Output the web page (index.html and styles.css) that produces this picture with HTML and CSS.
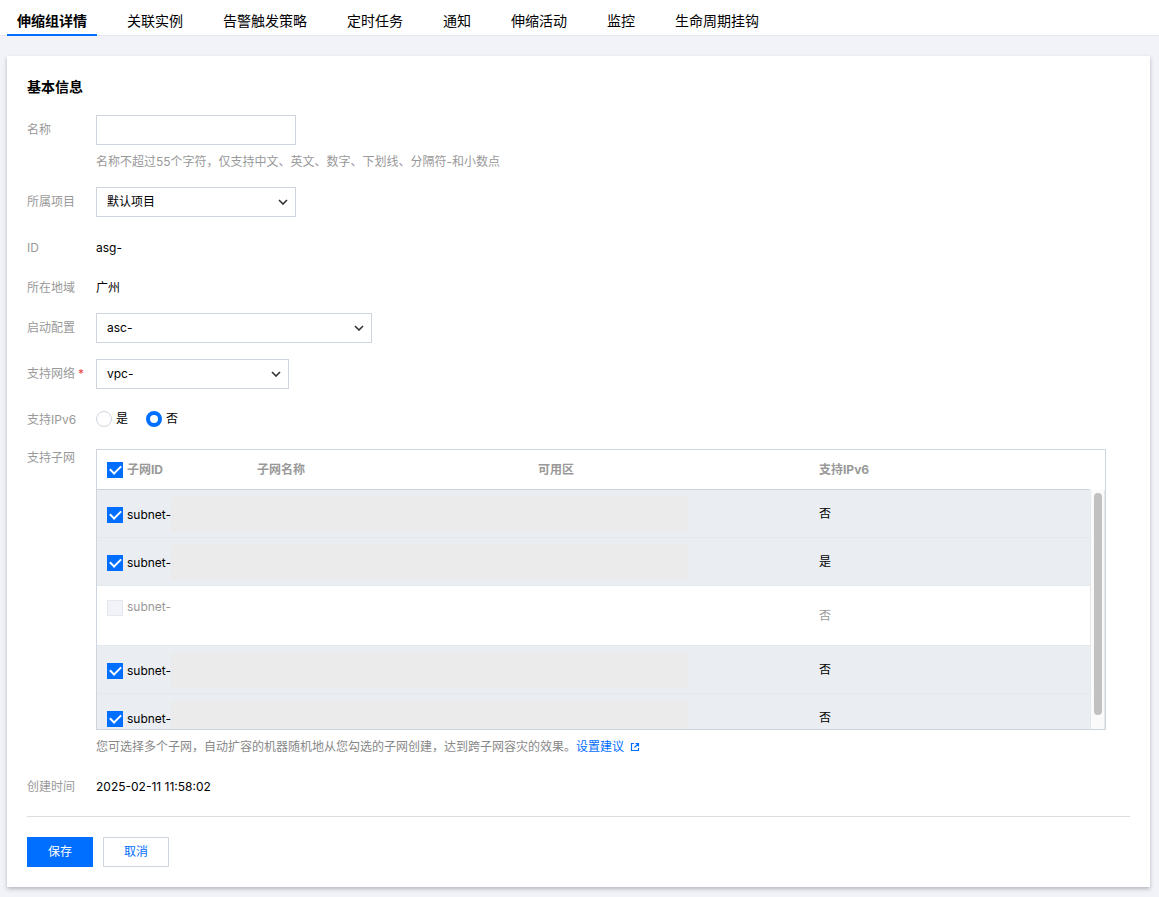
FILE: index.html
```html
<!DOCTYPE html>
<html lang="zh-CN">
<head>
  <meta charset="utf-8">
  <meta name="viewport" content="width=device-width, initial-scale=1">
  <link rel="stylesheet" href="styles.css">
  <title>伸缩组详情</title>
</head>
<body>

<nav class="tabs">
  <a class="tab active" href="#detail">伸缩组详情</a>
  <a class="tab" href="#instances">关联实例</a>
  <a class="tab" href="#alarm">告警触发策略</a>
  <a class="tab" href="#schedule">定时任务</a>
  <a class="tab" href="#notice">通知</a>
  <a class="tab" href="#activity">伸缩活动</a>
  <a class="tab" href="#monitor">监控</a>
  <a class="tab" href="#hooks">生命周期挂钩</a>
</nav>

<main class="card">
  <h1 class="title">基本信息</h1>
  <form>
    <div class="row">
      <label class="label" for="name">名称</label>
      <div class="control">
        <input id="name" class="input" type="text">
        <p class="hint">名称不超过55个字符，仅支持中文、英文、数字、下划线、分隔符-和小数点</p>
      </div>
    </div>
    <div class="row">
      <label class="label" for="project">所属项目</label>
      <div class="control">
        <div class="select project">
          <select id="project"><option>默认项目</option></select>
          <svg class="arrow" viewBox="0 0 10 6"><path d="M1 1l4 4 4-4"/></svg>
        </div>
      </div>
    </div>
    <div class="row">
      <span class="label">ID</span>
      <div class="control text">asg-</div>
    </div>
    <div class="row">
      <span class="label">所在地域</span>
      <div class="control text">广州</div>
    </div>
    <div class="row">
      <label class="label" for="config">启动配置</label>
      <div class="control">
        <div class="select config">
          <select id="config"><option>asc-</option></select>
          <svg class="arrow" viewBox="0 0 10 6"><path d="M1 1l4 4 4-4"/></svg>
        </div>
      </div>
    </div>
    <div class="row">
      <label class="label" for="vpc">支持网络<span class="required">*</span></label>
      <div class="control">
        <div class="select vpc">
          <select id="vpc"><option>vpc-</option></select>
          <svg class="arrow" viewBox="0 0 10 6"><path d="M1 1l4 4 4-4"/></svg>
        </div>
      </div>
    </div>
    <div class="row">
      <span class="label short">支持IPv6</span>
      <div class="control radios">
        <label class="radio"><input type="radio" name="ipv6">是</label>
        <label class="radio"><input type="radio" name="ipv6" checked>否</label>
      </div>
    </div>
    <div class="row">
      <span class="label">支持子网</span>
      <div class="control subnets">
        <div class="tableBox">
          <div class="tableHead">
            <table>
              <colgroup><col class="colId"><col><col><col></colgroup>
              <thead>
                <tr>
                  <th><label class="check"><input type="checkbox" checked>子网ID</label></th>
                  <th>子网名称</th>
                  <th>可用区</th>
                  <th>支持IPv6</th>
                </tr>
              </thead>
            </table>
          </div>
          <div class="tableBody">
            <div class="tableScroll">
              <table>
                <colgroup><col class="colId"><col><col><col></colgroup>
                <tbody>
                  <tr class="selected">
                    <td class="masked"><label class="check"><input type="checkbox" checked>subnet-<span class="mask"></span></label></td>
                    <td class="masked"><div class="mask"></div></td>
                    <td class="masked"><div class="mask zone"></div></td>
                    <td>否</td>
                  </tr>
                  <tr class="selected">
                    <td class="masked"><label class="check"><input type="checkbox" checked>subnet-<span class="mask"></span></label></td>
                    <td class="masked"><div class="mask"></div></td>
                    <td class="masked"><div class="mask zone"></div></td>
                    <td>是</td>
                  </tr>
                  <tr class="disabled">
                    <td><label class="check"><input type="checkbox" disabled>subnet-</label></td>
                    <td></td>
                    <td></td>
                    <td>否</td>
                  </tr>
                  <tr class="selected">
                    <td class="masked"><label class="check"><input type="checkbox" checked>subnet-<span class="mask"></span></label></td>
                    <td class="masked"><div class="mask"></div></td>
                    <td class="masked"><div class="mask zone"></div></td>
                    <td>否</td>
                  </tr>
                  <tr class="selected">
                    <td class="masked"><label class="check"><input type="checkbox" checked>subnet-<span class="mask"></span></label></td>
                    <td class="masked"><div class="mask"></div></td>
                    <td class="masked"><div class="mask zone"></div></td>
                    <td>否</td>
                  </tr>
                </tbody>
              </table>
            </div>
            <div class="scrollbar"><div class="thumb"></div></div>
          </div>
        </div>
        <p class="hint dark">您可选择多个子网，自动扩容的机器随机地从您勾选的子网创建，达到跨子网容灾的效果。<a class="link" href="#advice">设置建议<svg class="external" viewBox="0 0 10 10"><path d="M4 1.5H1.5v7h7V6M5.5 1.5h3v3M8.5 1.5L4.5 5.5"/></svg></a></p>
      </div>
    </div>
    <div class="row">
      <span class="label">创建时间</span>
      <div class="control text">2025-02-11 11:58:02</div>
    </div>
    <div class="actions">
      <button class="btn primary" type="submit">保存</button>
      <button class="btn" type="button">取消</button>
    </div>
  </form>
</main>

</body>
</html>
```
FILE: styles.css
```css
* {
  box-sizing: border-box;
}

body {
  margin: 0;
  background-color: #f2f3f8;
  color: #000;
  font-family: Inter, "Noto Sans CJK SC", sans-serif;
  font-size: 12px;
  line-height: 18px;
}

a {
  text-decoration: none;
}

input, select, button {
  font: inherit;
  color: inherit;
}

.tabs {
  display: flex;
  gap: 20px;
  padding: 0 7px;
  background-color: #fff;
  border-bottom: 1px solid #e5e8ed;
}

.tab {
  padding: 11px 10px 3px;
  margin-bottom: -1px;
  border-bottom: 2px solid transparent;
  color: #000;
  font-size: 14px;
  line-height: 20px;
}

.tab.active {
  border-color: #006eff;
  font-weight: bold;
}

.card {
  margin: 20px 9px 10px 7px;
  padding: 20px;
  background-color: #fff;
  box-shadow: 0 2px 4px 0 rgba(54, 58, 80, 0.32);
}

.title {
  margin: 0 0 17px;
  font-size: 14px;
  line-height: 22px;
}

/* form rows */
.row {
  display: flex;
  margin-bottom: 16px;
}

.label {
  flex: none;
  width: 69px;
  padding-top: 6px;
  color: #999;
}

.label.short {
  height: 22px;
}

.required {
  margin-left: 3px;
  color: #e54545;
}

.control {
  flex: 1;
  min-width: 0;
}

.control.text {
  padding-top: 6px;
}

.input {
  display: block;
  width: 200px;
  height: 30px;
  padding: 0 10px;
  border: 1px solid #cfd5de;
}

.hint {
  margin: 8px 0 0;
  color: #999;
}

.hint.dark {
  color: #888;
}

.select {
  display: grid;
  align-items: center;
}

.project {
  width: 200px;
}

.config {
  width: 276px;
}

.vpc {
  width: 193px;
}

.select select {
  grid-area: 1 / 1;
  appearance: none;
  height: 30px;
  padding: 0 30px 0 10px;
  border: 1px solid #cfd5de;
  border-radius: 0;
  background-color: #fff;
}

.arrow {
  grid-area: 1 / 1;
  justify-self: end;
  width: 10px;
  height: 6px;
  margin-right: 8px;
  fill: none;
  stroke: #333;
  stroke-width: 1.6;
  pointer-events: none;
}

.radios {
  display: flex;
  gap: 18px;
  padding-top: 6px;
}

.radio {
  display: flex;
  align-items: center;
  gap: 4px;
  height: 16px;
}

.radio input {
  appearance: none;
  width: 16px;
  height: 16px;
  margin: 0;
  border: 1px solid #cfd5de;
  border-radius: 50%;
}

.radio input:checked {
  border: 4px solid #006eff;
}

/* subnet table */
.subnets {
  padding-top: 6px;
}

.tableBox {
  margin-right: 24px;
  border: 1px solid #cfd5de;
}

.tableHead {
  padding-right: 15px;
}

.tableBody {
  display: flex;
  height: 239px;
}

.tableScroll {
  flex: 1;
  overflow-y: auto;
  scrollbar-width: none;
}

.scrollbar {
  width: 15px;
  padding: 3px;
  border: solid #e8e8e8;
  border-width: 0 1px;
  background-color: #fafafa;
}

.thumb {
  width: 8px;
  height: 222px;
  border-radius: 4px;
  background-color: #c1c1c1;
}

table {
  width: 100%;
  table-layout: fixed;
  border-collapse: separate;
  border-spacing: 0;
}

.colId {
  width: 150px;
}

th {
  height: 40px;
  padding: 0 10px;
  border-bottom: 1px solid #cfd5de;
  color: #999;
  text-align: left;
}

td {
  height: 48px;
  padding: 0 10px;
  border-bottom: 1px solid #e5e8ed;
}

.selected {
  background-color: #eaedf2;
}

.disabled {
  color: #999;
}

.disabled td {
  height: 60px;
}

.disabled td:first-child {
  padding-top: 12px;
  vertical-align: top;
}

.check {
  display: flex;
  align-items: center;
}

.check input {
  appearance: none;
  flex: none;
  display: grid;
  place-items: center;
  width: 16px;
  height: 16px;
  margin: 1px 4px 0 0;
  border: 1px solid #cfd5de;
}

.check input:checked {
  border-color: #006eff;
  background-color: #006eff;
}

.check input:checked::before {
  content: "";
  width: 9px;
  height: 5px;
  margin-bottom: 3px;
  border: solid #fff;
  border-width: 0 0 2px 2px;
  transform: rotate(-45deg);
}

.check input:disabled {
  border-color: #e5e8ed;
  background-color: #f2f3f8;
}

td.masked {
  padding: 7px 0 0;
  vertical-align: top;
}

.masked .check {
  padding-left: 10px;
}

.mask {
  flex: 1;
  height: 35px;
  background-color: #ebebeb;
}

.mask.zone {
  width: 57%;
}

.link {
  color: #006eff;
}

.external {
  width: 10px;
  height: 10px;
  margin-left: 6px;
  vertical-align: -1px;
  fill: none;
  stroke: #006eff;
  stroke-width: 1.2;
}

.actions {
  display: flex;
  gap: 10px;
  margin-top: 20px;
  padding-top: 20px;
  border-top: 1px solid #ddd;
}

.btn {
  width: 66px;
  height: 30px;
  padding: 0;
  border: 1px solid #cfd5de;
  background-color: #fff;
  color: #006eff;
}

.btn.primary {
  border-color: #006eff;
  background-color: #006eff;
  color: #fff;
}
```
